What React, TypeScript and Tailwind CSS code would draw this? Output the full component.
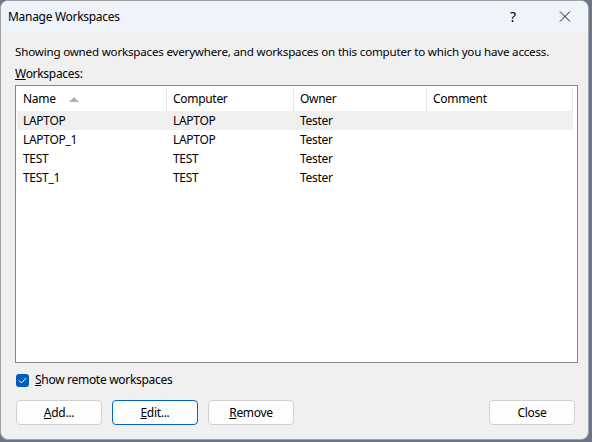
import React from "react";

const rows = [
  { name: "LAPTOP", computer: "LAPTOP", owner: "Tester" },
  { name: "LAPTOP_1", computer: "LAPTOP", owner: "Tester" },
  { name: "TEST", computer: "TEST", owner: "Tester" },
  { name: "TEST_1", computer: "TEST", owner: "Tester" },
];

const font = { fontFamily: '"Noto Sans", "Open Sans", sans-serif' };

function Btn({ children, focused }: { children: React.ReactNode; focused?: boolean }) {
  return (
    <button
      className={
        focused
          ? "w-[86px] h-[25px] rounded-[4px] bg-[#fdfdfd] border border-[#0067c0] text-[12px] tracking-[-0.3px] text-black flex items-center justify-center"
          : "w-[86px] h-[25px] rounded-[4px] bg-[#fdfdfd] border border-[#d0d0d0] text-[12px] tracking-[-0.3px] text-black flex items-center justify-center"
      }
    >
      {children}
    </button>
  );
}

export default function App() {
  return (
    <div className="w-[592px] h-[442px] bg-[#6b7688] flex" style={font}>
      <div className="w-[589px] h-[440px] bg-[#f0f0f0] rounded-lg border border-[#a0a0a0] overflow-hidden flex flex-col">
        {/* Title bar */}
        <div className="h-[31px] bg-[#eff3fa] flex items-center pl-[7px] shrink-0">
          <span className="text-[12px] tracking-[-0.3px] text-black">Manage Workspaces</span>
          <div className="ml-auto flex items-center">
            <span className="text-[14px] text-black w-[46px] text-center mr-[6px]">?</span>
            <svg width="46" height="31" viewBox="0 0 46 31">
              <path d="M18 10.5 L28 20.5 M28 10.5 L18 20.5" stroke="#1a1a1a" strokeWidth="1" />
            </svg>
          </div>
        </div>

        {/* Body */}
        <div className="flex flex-col pl-[14px] pr-[10px] flex-1 text-[12px] tracking-[-0.3px] text-black">
          <p className="mt-[12px] leading-[16px] whitespace-nowrap tracking-[-0.2px] text-[11.6px]">
            Showing owned workspaces everywhere, and workspaces on this computer to which you have access.
          </p>
          <p className="mt-[6px] leading-[16px]">
            <span className="underline">W</span>orkspaces:
          </p>

          <div className="mt-[3px] w-[563px] h-[278px] bg-white border border-[#828790] pt-px pl-px">
            <div className="flex h-[24px] w-[556px]">
              <div className="w-[150px] flex items-center pl-[6px] border-r border-[#e5e5e5]">
                Name
                <svg width="12" height="6" viewBox="0 0 12 6" className="ml-[12px]">
                  <path d="M1 6 L6 1 L11 6 Z" fill="#b5b09a" />
                </svg>
              </div>
              <div className="w-[127px] flex items-center pl-[6px] border-r border-[#e5e5e5]">Computer</div>
              <div className="w-[133px] flex items-center pl-[6px] border-r border-[#e5e5e5]">Owner</div>
              <div className="w-[146px] flex items-center pl-[6px] border-r border-[#e5e5e5]">Comment</div>
            </div>
            {rows.map((r, i) => (
              <div
                key={r.name}
                className={
                  i === 0
                    ? "flex h-[19px] items-center w-[556px] bg-[#efefef]"
                    : "flex h-[19px] items-center w-[556px]"
                }
              >
                <div className="w-[150px] pl-[6px]">{r.name}</div>
                <div className="w-[127px] pl-[6px]">{r.computer}</div>
                <div className="w-[133px] pl-[6px]">{r.owner}</div>
              </div>
            ))}
          </div>

          <div className="flex items-center mt-[8px]">
            <div className="w-[13px] h-[13px] rounded-[3px] bg-[#005fb8] flex items-center justify-center ml-px">
              <svg width="9" height="7" viewBox="0 0 9 7">
                <path d="M1 3.5 L3.5 6 L8 1" stroke="white" strokeWidth="1" fill="none" />
              </svg>
            </div>
            <span className="ml-[6px]">
              <span className="underline">S</span>how remote workspaces
            </span>
          </div>

          <div className="flex mt-[11px] pl-px">
            <div className="flex gap-[10px]">
              <Btn>
                <span className="underline">A</span>dd...
              </Btn>
              <Btn focused>
                <span className="underline">E</span>dit...
              </Btn>
              <Btn>
                <span className="underline">R</span>emove
              </Btn>
            </div>
            <div className="ml-auto mr-[3px]">
              <Btn>Close</Btn>
            </div>
          </div>
        </div>
      </div>
    </div>
  );
}
